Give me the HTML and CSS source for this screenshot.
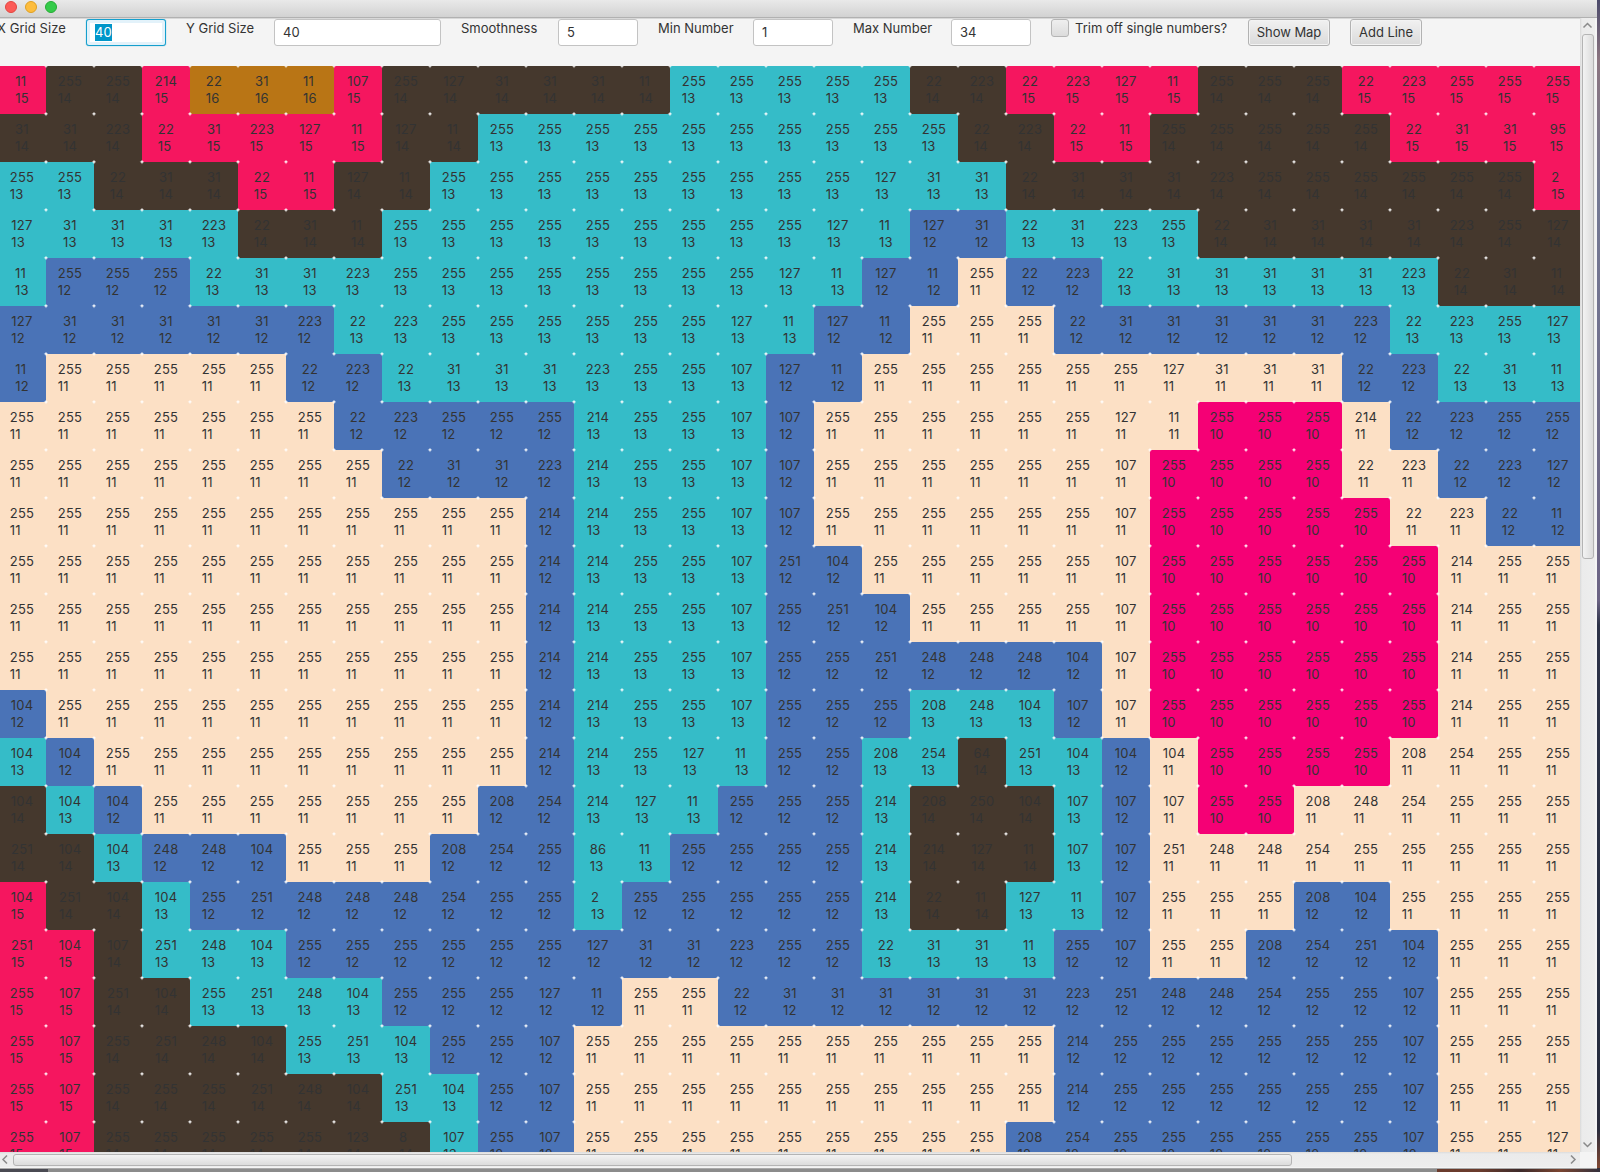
FILE: index.html
```html
<!DOCTYPE html>
<html lang="en">
<head>
<meta charset="utf-8">
<title>Grid Map</title>
<link rel="stylesheet" href="styles.css">
</head>
<body>
<div class="window">
  <header class="titlebar">
    <span class="light light-close"></span>
    <span class="light light-min"></span>
    <span class="light light-zoom"></span>
  </header>
  <div class="body">
    <main class="viewport">
      <form class="toolbar">
        <label class="caption w-x">X Grid Size</label>
        <div class="field focused"><span class="selected">40</span></div>
        <label class="caption w-y">Y Grid Size</label>
        <div class="field wide">40</div>
        <label class="caption w-smooth">Smoothness</label>
        <div class="field">5</div>
        <label class="caption w-min">Min Number</label>
        <div class="field">1</div>
        <label class="caption w-max">Max Number</label>
        <div class="field">34</div>
        <label class="check"><span class="box"></span><span>Trim off single numbers?</span></label>
        <button type="button" class="button show-map">Show Map</button>
        <button type="button" class="button add-line">Add Line</button>
      </form>
      <div class="grid" id="grid"></div>
    </main>
    <div class="scroll-v">
      <svg class="arrow" viewBox="0 0 15 15"><path d="M3.5 9.5 L7.5 5.5 L11.5 9.5"/></svg>
      <div class="track-v"><div class="thumb-v"></div></div>
      <svg class="arrow" viewBox="0 0 15 15"><path d="M3.5 5.5 L7.5 9.5 L11.5 5.5"/></svg>
    </div>
  </div>
  <div class="scroll-h">
    <svg class="arrow-left" viewBox="0 0 13 15"><path d="M7 3.5 L3 7.5 L7 11.5"/></svg>
    <div class="track-h"><div class="thumb-h"></div></div>
    <svg class="arrow" viewBox="0 0 15 15"><path d="M6 3.5 L10 7.5 L6 11.5"/></svg>
  </div>
</div>
<script src="grid.js"></script>
</body>
</html>
```
FILE: styles.css
```css
* { box-sizing: border-box; }
body {
  margin: 0;
  width: 1600px;
  height: 1172px;
  overflow: hidden;
  font: 13px/17px Inter, "Liberation Sans", sans-serif;
  color: #333;
  background:
    linear-gradient(90deg, #4a4a52 0 48px, #8b8b8b 48px 1437px, #6a3b2c 1437px 1480px, #3d2a2a 1520px, #7a4430 1560px, #33303c) 0 1168px / 1600px 4px no-repeat,
    linear-gradient(#4b4a6b 0, #8b7580 60px, #747994 200px, #6c6484 600px, #2d3348 625px, #252d40 1020px, #2a2c3c 1130px, #8a4a30 1172px);
}
.window {
  width: 1597px;
  height: 1169px;
  display: flex;
  flex-direction: column;
  background: #f4f4f4;
  border-bottom: 1px solid #a9a9a9;
}
.titlebar {
  height: 18px;
  flex: none;
  display: flex;
  gap: 8px;
  padding: 1px 0 0 5px;
  background: linear-gradient(#e9e9e9, #d2d2d2);
  border-bottom: 1px solid #b1b1b1;
}
.light { width: 12px; height: 12px; border-radius: 50%; border: 1px solid; }
.light-close { background: #fc5b57; border-color: #e24640; }
.light-min { background: #fdbd3e; border-color: #dfa023; }
.light-zoom { background: #35cb4a; border-color: #27ab35; }
.body { display: flex; height: 1134px; flex: none; }
.viewport { width: 1580px; overflow: hidden; border-top: 1px solid #d8d8d8; }

.toolbar {
  display: flex;
  align-items: flex-start;
  gap: 20px;
  height: 47px;
  margin-left: -3px;
}
.caption { flex: none; padding-top: 1px; white-space: nowrap; }
.w-x { width: 69px; letter-spacing: .07px; }
.w-y { width: 68px; }
.w-smooth { width: 77px; }
.w-min { width: 75px; }
.w-max { width: 78px; }
.field {
  flex: none;
  width: 80px;
  height: 27px;
  padding: 4px 8px;
  background: #fff;
  border: 1px solid #c3c3c3;
  border-radius: 3px;
}
.wide { width: 167px; }
.focused { border-color: #159fcd; box-shadow: 0 0 1px #159fcd, inset 0 0 0 3px #e3f2fa; }
.selected { display: inline-block; background: #0096c9; color: #fff; }
.check { flex: none; display: flex; gap: 6px; width: 177px; white-space: nowrap; line-height: 19px; }
.box { flex: none; width: 18px; height: 18px; border: 1px solid #b5b5b5; border-radius: 3px; background: linear-gradient(#efefef, #dcdcdc); }
.button {
  flex: none;
  height: 27px;
  padding: 0;
  font: inherit;
  color: inherit;
  letter-spacing: -.05px;
  white-space: nowrap;
  border: 1px solid #b2b2b2;
  border-radius: 3px;
  background: linear-gradient(#f1f1f1, #dadada);
  box-shadow: inset 0 0 0 1px #f3f3f3;
}
.show-map { width: 82px; }
.add-line { width: 72px; }

.grid {
  display: grid;
  grid-template-columns: repeat(33, 48px);
  grid-auto-rows: 48px;
  margin-left: -2px;
  letter-spacing: .25px;
  background: #fff;
}
.cell { display: flex; justify-content: center; padding-top: 7px; border-radius: 2.4px; }
.level-10 { background: #f50075; }
.level-11 { background: #fce0c5; }
.level-12 { background: #4a73b7; }
.level-13 { background: #35bcc8; }
.level-14 { background: #45382d; }
.level-15 { background: #f5165f; }
.level-16 { background: #b97515; }

.scroll-v {
  width: 15px;
  flex: none;
  display: flex;
  flex-direction: column;
  background: linear-gradient(90deg, #d9d9d9, #ebebeb 2px, #ededed);
}
.arrow { width: 15px; height: 15px; flex: none; }
.arrow-left { width: 13px; height: 15px; flex: none; }
svg { fill: none; stroke: #8a8a8a; stroke-width: 1.5; }
.track-v { flex: 1; padding: 1px 1px 0 2px; }
.thumb-v { height: 525px; border: 1px solid #b4b4b4; border-radius: 3px; background: linear-gradient(90deg, #f3f3f3, #dcdcdc); }
.scroll-h { width: 1580px; height: 15px; flex: none; display: flex; background: linear-gradient(#dcdcdc, #ebebeb 2px, #ededed); }
.track-h { flex: 1; padding-top: 2px; }
.thumb-h { width: 1279px; height: 12px; border: 1px solid #b4b4b4; border-radius: 3px; background: linear-gradient(#f3f3f3, #dcdcdc); }
```
FILE: grid.js
```js
// Each token is value/level, with an optional xN repeat count.
const rows = [
  "11/15 255/14x2 214/15 22/16 31/16 11/16 107/15 255/14 127/14 31/14x3 11/14 255/13x5 22/14 223/14 22/15 223/15 127/15 11/15 255/14x3 22/15 223/15 255/15x3",
  "31/14x2 223/14 22/15 31/15 223/15 127/15 11/15 127/14 11/14 255/13x10 22/14 223/14 22/15 11/15 255/14x5 22/15 31/15x2 95/15",
  "255/13x2 22/14 31/14x2 22/15 11/15 127/14 11/14 255/13x9 127/13 31/13x2 22/14 31/14x3 223/14 255/14x6 2/15",
  "127/13 31/13x3 223/13 22/14 31/14 11/14 255/13x9 127/13 11/13 127/12 31/12 22/13 31/13 223/13 255/13 22/14 31/14x4 223/14 255/14 127/14",
  "11/13 255/12x3 22/13 31/13x2 223/13 255/13x8 127/13 11/13 127/12 11/12 255/11 22/12 223/12 22/13 31/13x5 223/13 22/14 31/14 11/14",
  "127/12 31/12x5 223/12 22/13 223/13 255/13x6 127/13 11/13 127/12 11/12 255/11x3 22/12 31/12x5 223/12 22/13 223/13 255/13 127/13",
  "11/12 255/11x5 22/12 223/12 22/13 31/13x3 223/13 255/13x2 107/13 127/12 11/12 255/11x6 127/11 31/11x3 22/12 223/12 22/13 31/13 11/13",
  "255/11x7 22/12 223/12 255/12x3 214/13 255/13x2 107/13 107/12 255/11x6 127/11 11/11 255/10x3 214/11 22/12 223/12 255/12x2",
  "255/11x8 22/12 31/12x2 223/12 214/13 255/13x2 107/13 107/12 255/11x6 107/11 255/10x4 22/11 223/11 22/12 223/12 127/12",
  "255/11x11 214/12 214/13 255/13x2 107/13 107/12 255/11x6 107/11 255/10x5 22/11 223/11 22/12 11/12",
  "255/11x11 214/12 214/13 255/13x2 107/13 251/12 104/12 255/11x5 107/11 255/10x6 214/11 255/11x2",
  "255/11x11 214/12 214/13 255/13x2 107/13 255/12 251/12 104/12 255/11x4 107/11 255/10x6 214/11 255/11x2",
  "255/11x11 214/12 214/13 255/13x2 107/13 255/12x2 251/12 248/12x3 104/12 107/11 255/10x6 214/11 255/11x2",
  "104/12 255/11x10 214/12 214/13 255/13x2 107/13 255/12x3 208/13 248/13 104/13 107/12 107/11 255/10x6 214/11 255/11x2",
  "104/13 104/12 255/11x9 214/12 214/13 255/13 127/13 11/13 255/12x2 208/13 254/13 64/14 251/13 104/13 104/12 104/11 255/10x4 208/11 254/11 255/11x2",
  "104/14 104/13 104/12 255/11x7 208/12 254/12 214/13 127/13 11/13 255/12x3 214/13 208/14 250/14 104/14 107/13 107/12 107/11 255/10x2 208/11 248/11 254/11 255/11x3",
  "251/14 104/14 104/13 248/12x2 104/12 255/11x3 208/12 254/12 255/12 86/13 11/13 255/12x4 214/13 214/14 127/14 11/14 107/13 107/12 251/11 248/11x2 254/11 255/11x5",
  "104/15 251/14 104/14 104/13 255/12 251/12 248/12x3 254/12 255/12x2 2/13 255/12x5 214/13 22/14 11/14 127/13 11/13 107/12 255/11x3 208/12 104/12 255/11x4",
  "251/15 104/15 107/14 251/13 248/13 104/13 255/12x6 127/12 31/12x2 223/12 255/12x2 22/13 31/13x2 11/13 255/12 107/12 255/11x2 208/12 254/12 251/12 104/12 255/11x3",
  "255/15 107/15 251/14 104/14 255/13 251/13 248/13 104/13 255/12x3 127/12 11/12 255/11x2 22/12 31/12x6 223/12 251/12 248/12x2 254/12 255/12x2 107/12 255/11x3",
  "255/15 107/15 255/14 251/14 248/14 104/14 255/13 251/13 104/13 255/12x2 107/12 255/11x10 214/12 255/12x6 107/12 255/11x3",
  "255/15 107/15 255/14x3 251/14 248/14 104/14 251/13 104/13 255/12 107/12 255/11x10 214/12 255/12x6 107/12 255/11x3",
  "255/15 107/15 255/14x5 123/14 8/14 107/13 255/12 107/12 255/11x9 208/12 254/12 255/12x6 107/12 255/11x2 127/11"
];

const grid = document.getElementById("grid");
for (const row of rows) {
  for (const token of row.split(" ")) {
    const [, value, level, count] = token.match(/^(\d+)\/(\d+)(?:x(\d+))?$/);
    for (let i = 0; i < Number(count || 1); i++) {
      const cell = document.createElement("div");
      cell.className = "cell level-" + level;
      const text = document.createElement("span");
      text.append(value, document.createElement("br"), level);
      cell.append(text);
      grid.append(cell);
    }
  }
}
```
